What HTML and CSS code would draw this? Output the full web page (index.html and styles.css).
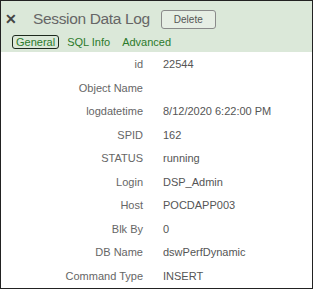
FILE: index.html
```html
<!DOCTYPE html>
<html lang="en">
<head>
    <meta charset="UTF-8">
    <title>Session Data Log</title>
    <link rel="stylesheet" href="styles.css">
</head>
<body>
    <div class="dialog">
        <div class="head">
            <div class="title-row">
                <span class="close">&#x2715;</span>
                <span class="title">Session Data Log</span>
                <button class="btn">Delete</button>
            </div>
            <ul class="tabs">
                <li class="selected">General</li>
                <li>SQL Info</li>
                <li>Advanced</li>
            </ul>
        </div>
        <div class="fields">
            <div class="label">id</div><div class="value">22544</div>
            <div class="label">Object Name</div><div class="value"></div>
            <div class="label">logdatetime</div><div class="value">8/12/2020 6:22:00 PM</div>
            <div class="label">SPID</div><div class="value">162</div>
            <div class="label">STATUS</div><div class="value">running</div>
            <div class="label">Login</div><div class="value">DSP_Admin</div>
            <div class="label">Host</div><div class="value">POCDAPP003</div>
            <div class="label">Blk By</div><div class="value">0</div>
            <div class="label">DB Name</div><div class="value">dswPerfDynamic</div>
            <div class="label">Command Type</div><div class="value">INSERT</div>
        </div>
    </div>
</body>
</html>
```

FILE: styles.css
```css
*{
    margin: 0;
    padding: 0;
    box-sizing: border-box;
}
body{
    font-family: "Liberation Sans", Arial, sans-serif;
    background: #fff;
}
ul{
    list-style: none;
}
.dialog{
    width: 313px;
    height: 289px;
    border: 1px solid #222;
    overflow: hidden;
}
.head{
    background: #dbe8d9;
    height: 51px;
    padding: 7px 0 0 4px;
}
.title-row{
    display: flex;
    align-items: center;
    height: 22px;
}
.close{
    width: 14px;
    font-size: 14px;
    font-weight: bold;
    color: #444;
}
.title{
    margin-left: 14px;
    font-size: 15.5px;
    letter-spacing: -0.35px;
    color: #666;
}
.btn{
    margin-left: 11px;
    width: 55px;
    height: 19px;
    border: 1px solid #8a8a8a;
    border-radius: 3px;
    background: #e6eee4;
    color: #555;
    font-family: inherit;
    font-size: 10px;
}
.tabs{
    display: flex;
    align-items: center;
    margin: 5px 0 0 7px;
}
.tabs li{
    font-size: 11px;
    line-height: 12px;
    color: #2b7a2b;
    padding: 0 3px;
    margin-right: 4px;
    border: 1.5px solid transparent;
    border-radius: 3px;
}
.tabs li.selected{
    border-color: #1e2a1e;
}
.fields{
    display: grid;
    grid-template-columns: 142px 1fr;
    column-gap: 20px;
    row-gap: 10.5px;
    padding-top: 6px;
    font-size: 11px;
    line-height: 13px;
}
.label{
    text-align: right;
    color: #666;
}
.value{
    color: #555;
}
```
